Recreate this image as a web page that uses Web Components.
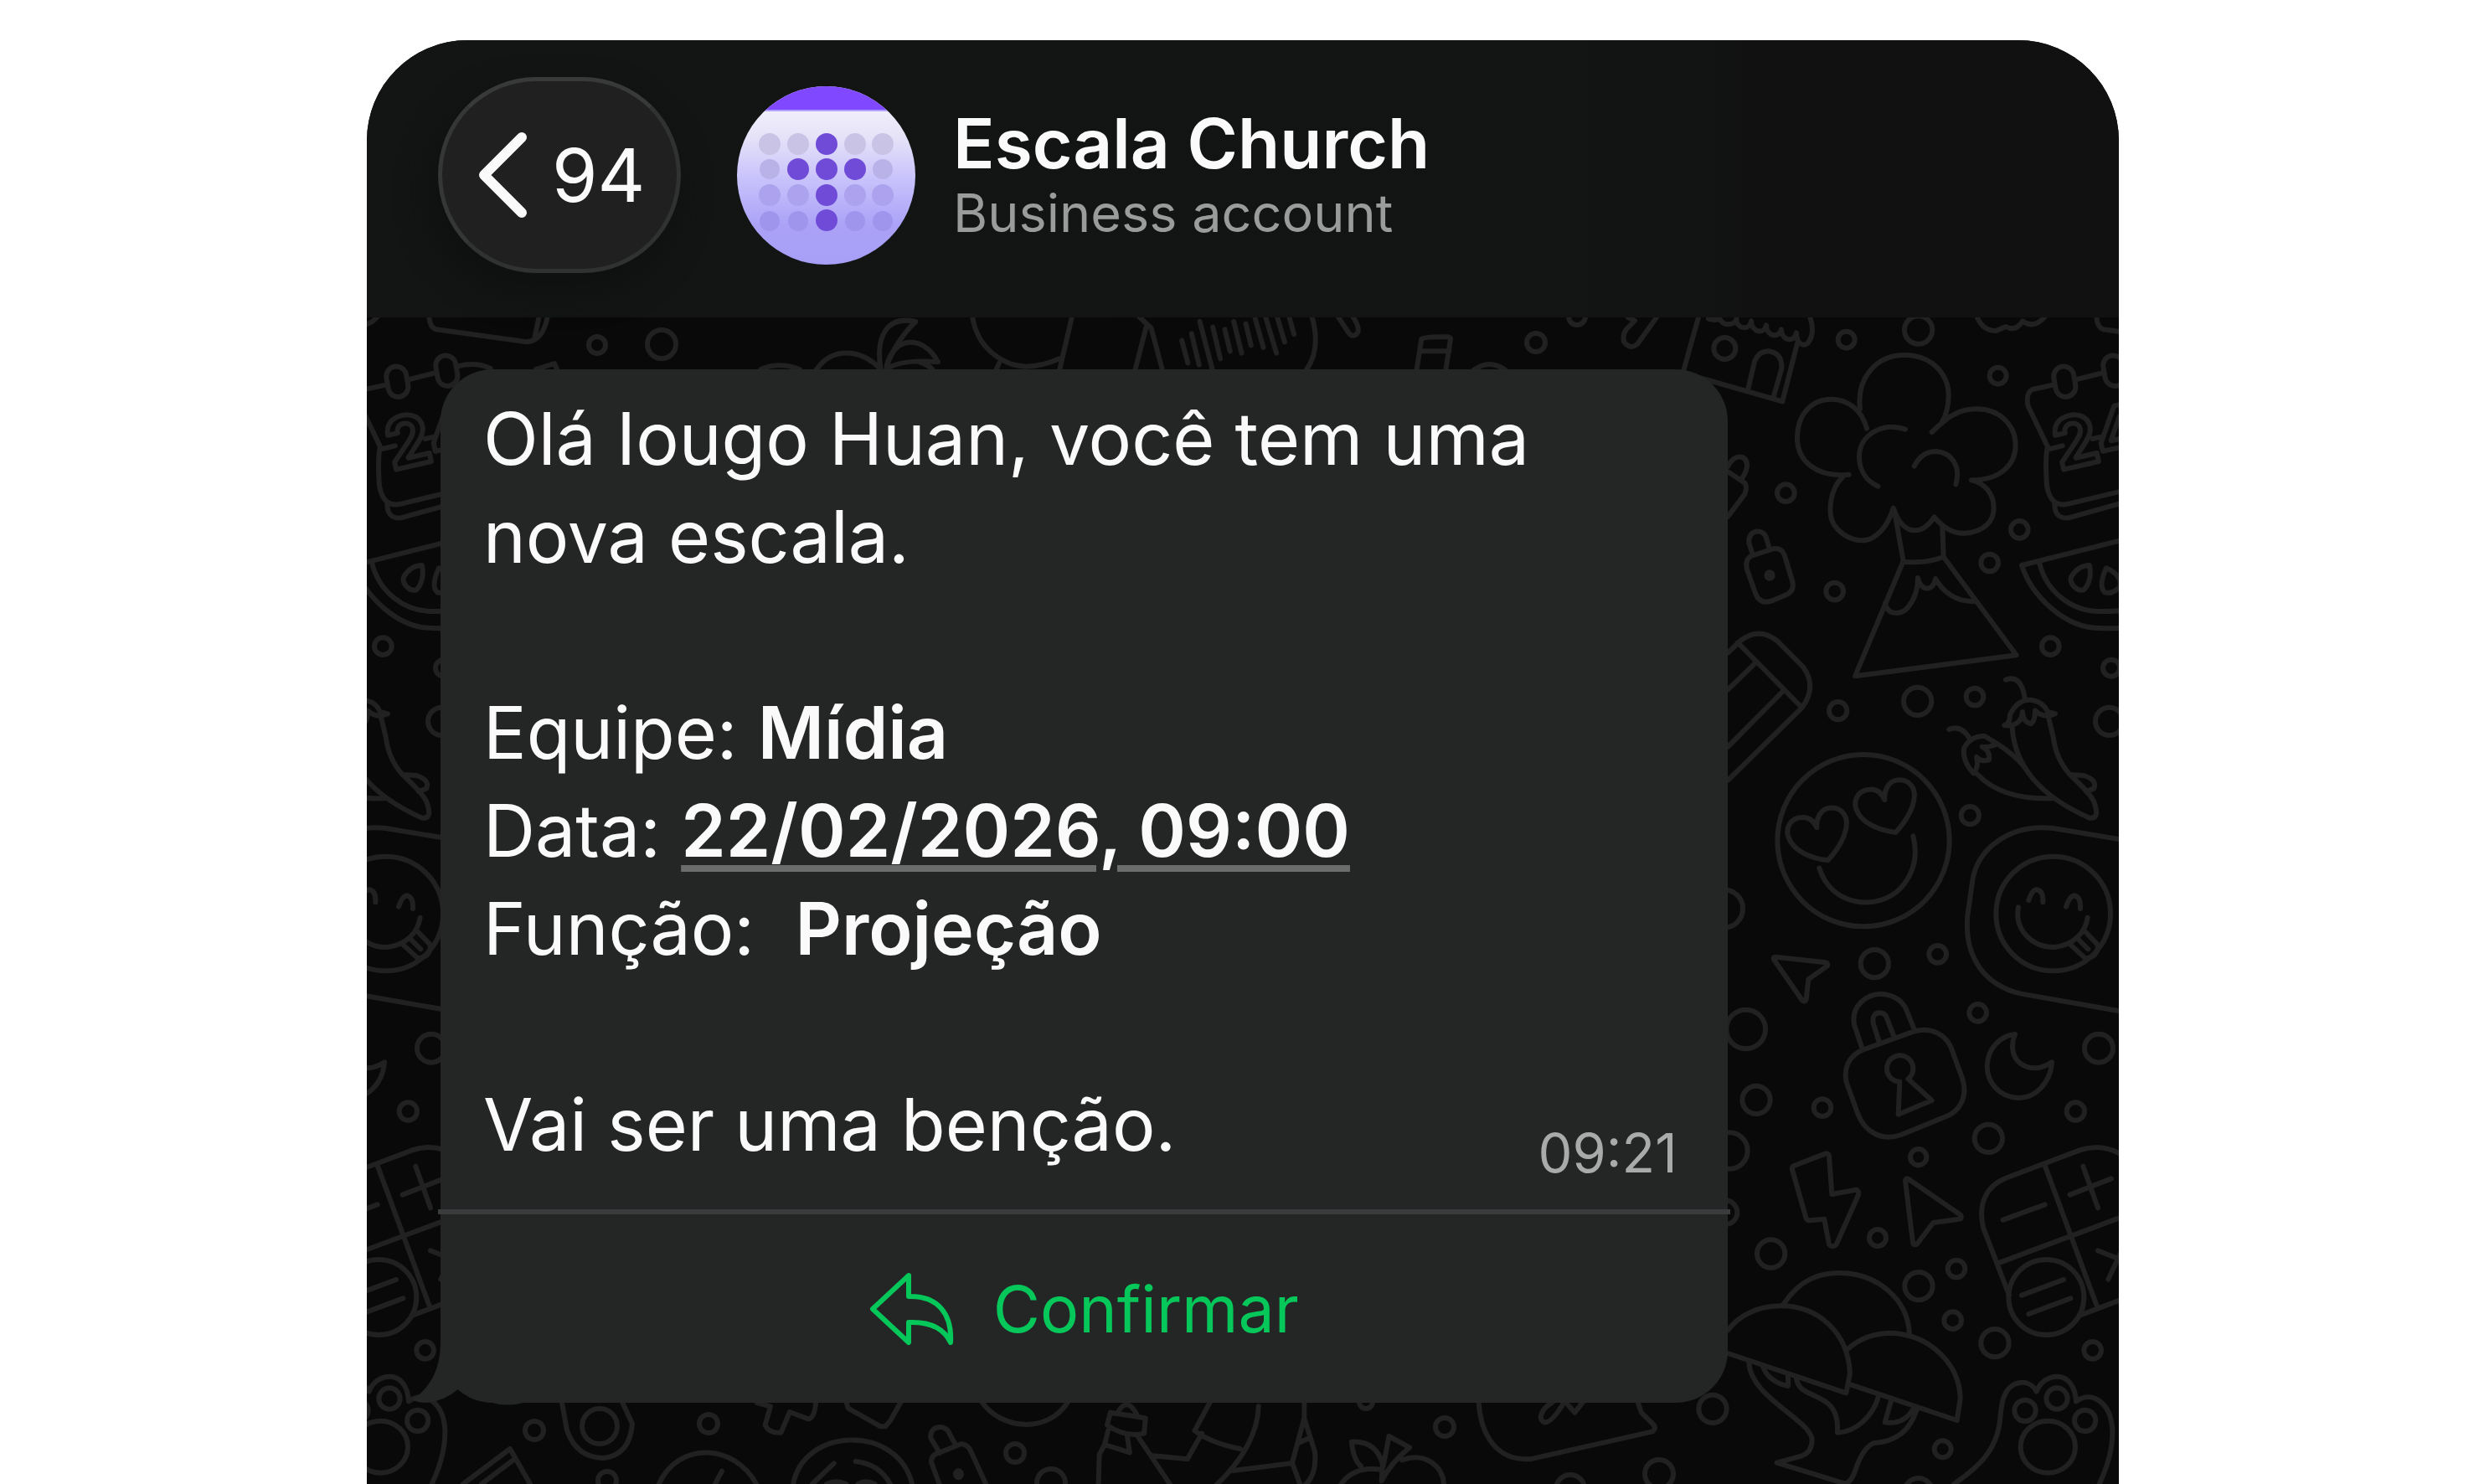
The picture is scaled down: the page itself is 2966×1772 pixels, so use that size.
<!DOCTYPE html>
<html lang="pt-BR">
<head>
<meta charset="utf-8">
<meta name="viewport" content="width=device-width, initial-scale=1">
<title>Escala Church</title>
<style>
  body { margin: 0; background: #fff; font-family: Inter, "Liberation Sans", sans-serif; color: #fafafa; }
  message-bubble strong, message-bubble a { font-weight: 600; color: inherit; }
  message-bubble a { text-decoration: underline; text-decoration-color: #6b6c6c; text-decoration-thickness: 8px; text-underline-offset: 10px; }
</style>
</head>
<body>
<chat-screen>
  <chat-header slot="header" unread="94" name="Escala Church" status="Business account"></chat-header>
  <message-bubble time="09:21" action="Confirmar">
    <p>Olá Iougo Huan, você tem uma nova escala.</p>
    <p>Equipe: <strong>Mídia</strong><br>Data: <a href="#data">22/02/2026, 09:00</a><br>Função:&nbsp; <strong>Projeção</strong></p>
    <p slot="closing">Vai ser uma benção.</p>
  </message-bubble>
</chat-screen>

<template id="screen-tpl">
  <style>
    :host { display: flex; flex-direction: column; box-sizing: border-box; min-height: 100vh; padding: 48px 436px 0 438px; }
    .phone { flex: 1; display: flex; flex-direction: column; border-radius: 120px 120px 0 0; overflow: hidden; background: #090909; }
    .chat { flex: 1; display: grid; }
    .chat > * { grid-area: 1 / 1; }
    .thread { padding: 62px 88px 0; display: flex; flex-direction: column; align-items: flex-start; }
  </style>
  <main class="phone">
    <slot name="header"></slot>
    <section class="chat">
      <doodle-wallpaper></doodle-wallpaper>
      <div class="thread"><slot></slot></div>
    </section>
  </main>
</template>

<template id="header-tpl">
  <style>
    :host { display: block; }
    header { display: flex; align-items: center; padding: 44px 85px 53px; background: linear-gradient(90deg, #121514, #121414 74%, #111 79%); }
    button { box-sizing: border-box; width: 290px; height: 234px; border: 5px solid #303232; border-top-color: #383a3a; border-left-color: #353737; border-radius: 117px; background: #202020; color: #fafafa; font: inherit; font-size: 88px; line-height: 100px; display: flex; align-items: center; gap: 30px; padding: 0 0 0 43px; margin-right: 67px; box-shadow: -8px 20px 40px #0f1010; }
    .chevron { width: 58px; height: 102px; }
    .avatar { width: 213px; height: 213px; margin-right: 45px; }
    h1 { margin: 0; font-size: 82px; line-height: 90px; font-weight: 600; }
    p { margin: 0; font-size: 63px; line-height: 74px; color: #9a9b9b; }
  </style>
  <header>
    <button type="button" aria-label="Voltar">
      <svg class="chevron" viewBox="0 0 58 102" fill="none" stroke="#fafafa" stroke-width="12" stroke-linecap="round" stroke-linejoin="round" aria-hidden="true"><path d="M52 6 7 51l45 45"/></svg>
      <span id="unread"></span>
    </button>
    <svg class="avatar" viewBox="0 0 213 213" aria-hidden="true">
      <defs>
        <linearGradient id="sky" x1="0" y1="0" x2="0" y2="1"><stop offset=".14" stop-color="#f0eefb"/><stop offset=".28" stop-color="#e6e3f8"/><stop offset=".52" stop-color="#c8c2fb"/><stop offset=".78" stop-color="#aba2f7"/><stop offset="1" stop-color="#a79ef7"/></linearGradient>
        <clipPath id="disc"><circle cx="106.5" cy="106.5" r="106.5"/></clipPath>
      </defs>
      <g clip-path="url(#disc)">
        <rect width="213" height="213" fill="url(#sky)"/>
        <rect width="213" height="28" fill="#8049ff"/>
        <rect y="28" width="213" height="2" fill="#b0a2fa"/>
        <g fill="#c9c4e6"><circle cx="39" cy="69" r="13"/><circle cx="73" cy="69" r="13"/><circle cx="141" cy="69" r="13"/><circle cx="174" cy="69" r="13"/></g>
        <g fill="#b9b2e8"><circle cx="39" cy="99" r="12"/><circle cx="174" cy="99" r="12"/></g>
        <g fill="#aca2ee"><circle cx="39" cy="130" r="13"/><circle cx="73" cy="130" r="13"/><circle cx="141" cy="130" r="13"/><circle cx="174" cy="130" r="13"/></g>
        <g fill="#9f95ed"><circle cx="39" cy="161" r="12"/><circle cx="73" cy="161" r="12"/><circle cx="141" cy="161" r="12"/><circle cx="174" cy="161" r="12"/></g>
        <g fill="#6f4bd8"><circle cx="107" cy="69" r="13"/><circle cx="73" cy="99" r="13"/><circle cx="107" cy="99" r="13"/><circle cx="141" cy="99" r="13"/><circle cx="107" cy="130" r="13"/><circle cx="107" cy="160" r="13"/></g>
      </g>
    </svg>
    <div><h1></h1><p></p></div>
  </header>
</template>

<template id="bubble-tpl">
  <style>
    :host { --line: 117px; --surface: #242625; display: block; width: 80.2%; min-width: 1200px; }
    article { display: grid; position: relative; background: var(--surface); border-radius: 62px; }
    .tail { position: absolute; left: -34px; bottom: -6px; width: 140px; height: 84px; }
    .body { display: flex; flex-direction: column; gap: var(--line); padding: 25px 60px 42px 51px; font-size: 86px; line-height: var(--line); }
    ::slotted(p) { margin: 0; }
    .last { display: flex; justify-content: space-between; align-items: flex-end; }
    time { font-size: 65px; line-height: 50px; color: #a9aaaa; }
    button { position: relative; border: 0; border-top: 6px solid #3a3b3d; margin: 0 -3px; height: 231px; padding: 0; background: none; color: #06c75a; font: inherit; font-size: 77px; display: flex; justify-content: center; align-items: center; gap: 46px; }
    button svg { width: 102px; height: 88px; }
  </style>
  <article>
    <svg class="tail" viewBox="492 1597 140 84" aria-hidden="true"><path fill="#242625" d="M526 1597C527 1632 516 1656 492 1671q6 4 18 4 20-2 37-16 18 12 41 16 17 5 37 0V1597z"/></svg>
    <div class="body">
      <slot></slot>
      <div class="last"><slot name="closing"></slot><time></time></div>
    </div>
    <button type="button">
      <svg viewBox="0 0 102 88" fill="none" stroke="currentColor" stroke-width="6" stroke-linejoin="round" aria-hidden="true"><path d="M47 4 4 44l43 40V60c22-1 41 5 50 24C99 50 82 28 47 29z"/></svg>
      <span></span>
    </button>
  </article>
</template>

<template id="doodle-tpl">
  <style>
    :host { display: block; height: 0; min-height: 100%; }
    svg { display: block; width: 100%; height: 100%; }
    path, circle, ellipse, rect, text { vector-effect: non-scaling-stroke; }
    text { font: 700 250px Inter, sans-serif; }
  </style>
  <svg viewBox="438 379 2092 1393" preserveAspectRatio="xMinYMin slice" fill="none" stroke="#212121" stroke-width="6" stroke-linecap="round" stroke-linejoin="round" aria-hidden="true">
    <defs>
      <g id="tile">
        <g transform="translate(2040 360) scale(.33333)">
          <circle cx="58" cy="168" r="39"/><circle cx="494" cy="137" r="30"/><circle cx="752" cy="102" r="50"/><circle cx="1037" cy="266" r="30"/><circle cx="277" cy="686" r="31"/><circle cx="1114" cy="817" r="31"/><circle cx="1007" cy="936" r="31"/><circle cx="452" cy="1038" r="31"/><circle cx="1225" cy="1235" r="31"/><circle cx="1443" cy="1313" r="30"/>
          <path d="M-36 57-88 243M-100 255 10 285 265 358 318 150M140 322 165 215Q180 178 215 178 265 185 262 240L232 345"/>
          <path d="M0 62Q25 70 40 62C55 92 95 85 100 62 100 100 148 105 153 70 155 112 200 118 207 85 208 128 255 132 261 100 262 142 308 148 315 112 315 160 345 158 355 150Q385 115 362 50"/>
          <path d="M960 50Q980 105 1030 105L1065 90Q1100 110 1125 70 1165 100 1205 55M1390 50Q1390 92 1415 100L1740 145Q1800 140 1815 50M1785 50 1768 130"/>
          <path d="M567 455C550 390 500 350 440 350 365 350 318 410 318 488 318 570 385 632 503 620M480 630C435 670 425 760 450 800 485 850 550 870 590 845 630 820 650 780 662 740 680 790 705 820 740 820 765 820 790 800 809 772 840 810 880 832 920 830 985 825 1022 790 1022 740 1022 690 990 650 942 640 1050 640 1100 580 1100 515 1100 440 1040 385 960 385 890 385 850 420 800 468"/>
          <path d="M543 385C530 280 595 192 703 192 810 192 860 270 860 335 860 380 850 410 835 435M705 458C620 430 540 480 540 555 540 610 570 645 607 662M737 590C760 545 790 537 815 537 870 540 905 590 886 655"/>
          <path d="M665 745 698 930 525 1342 1103 1267 842 915 838 805M698 932Q775 940 842 915M633 1080C640 1125 690 1125 715 1095 740 1065 750 1030 750 990 760 1040 805 1040 813 993 840 1040 890 1080 955 1073"/>
          <path d="M152 912 235 885Q262 882 272 908L300 1000Q310 1035 280 1050L225 1073Q185 1085 170 1050L138 960Q130 925 152 912ZM158 905 145 865C140 815 200 810 208 850L218 885"/>
          <circle cx="219" cy="981" r="11" fill="#212121"/>
          <path d="M70 590C90 545 140 545 138 590Q135 615 115 640M70 610 130 650Q140 665 130 690L70 770"/>
          <path d="M70 1258 115 1215Q180 1165 245 1215L340 1310Q390 1380 335 1455L70 1715M105 1222 335 1455M70 1390 168 1295M70 1595 268 1395"/>
          <path d="M1238 298 1160 315Q1135 330 1145 375L1215 520Q1205 560 1212 660 1225 740 1290 725L1560 660M1240 725Q1240 780 1290 775L1560 700M1315 280 1415 255M1492 232Q1560 215 1610 240M1215 530 1268 517M1375 492 1408 485"/>
          <rect x="1240" y="232" width="72" height="110" rx="36" transform="rotate(-10 1276 287)"/>
          <rect x="1417" y="193" width="72" height="110" rx="36" transform="rotate(-10 1453 248)"/>
          <text x="1258" y="605" transform="rotate(-13 1258 605)">24</text>
          <path d="M1122 945 1560 835M1122 945C1160 1060 1280 1170 1400 1170Q1500 1175 1600 1150M1185 935C1210 1040 1300 1110 1400 1110Q1480 1112 1560 1095M1365 945Q1375 1000 1345 1033C1320 1040 1290 1010 1300 985Q1325 945 1365 945ZM1425 955Q1395 1020 1420 1042 1450 1050 1475 1020 1480 980 1425 955Z"/>
        </g>
        <g transform="translate(2040 800) scale(.33333)">
          <circle cx="464" cy="146" r="32"/><circle cx="749" cy="112" r="50"/><circle cx="954" cy="96" r="31"/><circle cx="1436" cy="184" r="50"/><circle cx="937" cy="521" r="32"/><circle cx="595" cy="1052" r="50"/><circle cx="821" cy="1018" r="31"/><circle cx="55" cy="855" r="68"/><circle cx="134" cy="1287" r="70"/><circle cx="965" cy="1228" r="31"/><circle cx="1398" cy="1355" r="51"/>
          <path d="M1065 35Q1120 15 1133 100M1060 198Q1080 195 1080 160 1110 100 1160 108 1200 115 1215 150L1242 157Q1200 175 1170 145 1170 185 1155 193 1125 185 1125 150 1120 205 1060 198M1088 205C1095 320 1160 440 1365 530Q1405 535 1380 470 1365 440 1295 375 1245 320 1235 240L1218 170M1295 375 1345 378Q1395 395 1380 425L1352 435"/>
          <path d="M862 213Q905 195 935 245M950 370Q910 330 915 280 940 235 990 237L1035 265Q1000 280 980 275 1010 290 1005 322 975 330 960 312 970 345 950 370M965 375Q1050 465 1230 460M1035 265Q1090 300 1130 345"/>
          <circle cx="555" cy="611" r="308"/>
          <path id="heart" d="M388 565Q370 525 335 528C290 530 275 570 287 600 305 650 370 675 428 682 470 635 495 590 495 545 490 500 455 490 430 495 400 500 385 535 388 565Z"/>
          <use href="#heart" x="243" y="-100"/>
          <path d="M397 710C440 850 610 865 690 780Q760 700 733 595"/>
          <path d="M1560 621 1235 567C1080 550 960 640 945 760L928 880C915 1030 990 1130 1120 1160L1560 1237"/>
          <circle cx="1235" cy="873" r="205"/>
          <path d="M1147 825Q1160 787 1175 787 1200 790 1198 832M1281 848Q1295 808 1312 808 1335 815 1332 855M1110 850C1095 930 1160 995 1240 993 1310 985 1350 940 1358 887M1345 933 1395 985Q1395 1030 1350 1033L1298 985M1320 960 1360 1000"/>
          <path d="M240 1028 420 1048Q430 1050 425 1060L358 1108 350 1180Q345 1192 335 1183L234 1037Q230 1028 240 1028Z"/>
          <path d="M550 1362 735 1295C800 1275 850 1310 868 1350L910 1465C930 1530 900 1580 850 1600L690 1665C620 1690 560 1655 535 1590L495 1480C480 1420 510 1380 550 1362ZM550 1355 522 1270C510 1200 570 1160 620 1160 670 1165 700 1190 712 1225L738 1290M612 1335 590 1265Q585 1228 615 1228 635 1230 640 1250L663 1310M685 1475A47 47 0 1 1 715 1465L800 1542 680 1592Z"/>
          <path d="M1098 1305C1060 1400 1150 1460 1230 1405 1225 1480 1170 1535 1110 1533 1040 1530 998 1475 998 1420 1000 1350 1050 1310 1098 1305Z"/>
        </g>
        <g transform="translate(2040 1280) scale(.33333)">
          <circle cx="171" cy="100" r="50"/><circle cx="408" cy="128" r="31"/><circle cx="75" cy="282" r="65"/><circle cx="1315" cy="141" r="32"/><circle cx="1003" cy="238" r="50"/><circle cx="752" cy="305" r="29"/><circle cx="60" cy="503" r="43"/><circle cx="224" cy="651" r="50"/><circle cx="606" cy="594" r="30"/><circle cx="888" cy="705" r="31"/><circle cx="753" cy="767" r="50"/><circle cx="875" cy="890" r="31"/><circle cx="1026" cy="971" r="50"/><circle cx="1376" cy="997" r="31"/><circle cx="15" cy="1207" r="50"/><circle cx="839" cy="1351" r="30"/><circle cx="752" cy="1505" r="50"/>
          <path d="M306 336 420 292Q430 292 432 300L442 438 530 422Q540 428 537 440L458 618Q445 632 432 618L415 527 360 532Q350 530 348 518L300 350Q298 340 306 336Z"/>
          <path d="M705 390Q708 376 718 385L903 512Q910 525 898 527L805 540 748 615Q735 625 732 610Z"/>
          <path d="M1077 800 985 560C965 480 990 410 1065 380L1330 280Q1420 250 1500 310M1205 335 1390 835M1045 682 1560 490M1055 530 1205 475M1342 338 1395 487M1295 440 1443 382M1395 640 1520 690M1432 743 1490 620M1122 800 1272 744M1147 867 1297 811M1330 872 1560 785"/>
          <circle cx="1210" cy="807" r="135"/>
          <path d="M270 830C330 740 400 720 470 720 600 720 715 810 720 940M70 925C110 870 180 838 260 838 390 838 500 930 507 1080L493 1150 70 1008M500 992C550 945 610 935 660 935 800 945 900 1050 902 1170L890 1248 510 1120"/>
          <path d="M145 1042C150 1160 350 1240 370 1310Q375 1360 335 1375L245 1400 490 1475Q510 1470 525 1430 550 1350 590 1330C670 1325 720 1290 748 1205M195 1055Q215 1110 285 1125L285 1085M315 1095C320 1160 400 1150 440 1200Q465 1230 462 1292C530 1290 590 1230 608 1165M655 1175 632 1255Q700 1265 735 1205"/>
          <path d="M880 1476C960 1420 1035 1360 1045 1240Q1050 1180 1060 1160C1080 1105 1150 1095 1175 1145 1200 1075 1310 1060 1317 1180 1370 1140 1440 1180 1447 1280Q1450 1370 1400 1476"/>
          <circle cx="1134" cy="1213" r="38"/><circle cx="1248" cy="1170" r="38"/><circle cx="1349" cy="1249" r="38"/><ellipse cx="1216" cy="1343" rx="98" ry="93"/>
        </g>
      </g>
    </defs>
    <use href="#tile"/>
    <use href="#tile" x="-1991"/>
    <circle cx="713" cy="412" r="10"/><circle cx="790" cy="411" r="17"/><circle cx="1834" cy="409" r="11"/><circle cx="1883" cy="378" r="10"/>
    <path d="M640 441 662 434 665 441M1978 379 1955 411Q1946 418 1939 408 1937 400 1942 393L1952 383M1944 379 1952 383"/>
    <g transform="translate(700 370) scale(.33333)">
      <path d="M625 213Q690 185 765 213M825 213C880 135 980 135 1055 213 1035 90 1080 20 1180 42 1130 90 1095 150 1075 205 1100 90 1210 90 1260 187Q1130 175 1075 213M1195 187Q1230 200 1240 213"/>
    </g>
    <g transform="translate(1100 40) scale(.44643 .33333)">
      <path d="M137 1015C150 1130 220 1190 280 1193Q330 1190 368 1165M403 1015 370 1205M208 1182 200 1205M583 1015 615 1055 645 1205M603 1045 572 1205"/>
      <path d="M697 1100 713 1180M723 1075 743 1187M745 1032 778 1200M780 1052 800 1165M812 1060 826 1138M836 1032 857 1145M868 1040 882 1117M893 1020 915 1125M922 1020 950 1145M953 1020 972 1105M985 1020 997 1077M1045 1015Q1070 1130 1030 1205M1115 1015 1142 1070Q1155 1095 1168 1070 1172 1050 1155 1015"/>
      <path d="M1325 1205 1338 1095Q1345 1085 1410 1087 1418 1090 1415 1100L1403 1205M1335 1138 1412 1138M1478 1205Q1520 1165 1562 1205"/>
    </g>
    <circle cx="716" cy="1703" r="21"/><circle cx="846" cy="1700" r="11"/><circle cx="725" cy="1768" r="11"/><circle cx="1212" cy="1735" r="11"/><circle cx="1255" cy="1771" r="17"/><circle cx="638" cy="1708" r="11"/><circle cx="1725" cy="1704" r="11"/><circle cx="1631" cy="1674" r="8"/><circle cx="1981" cy="1760" r="17"/><circle cx="1875" cy="1778" r="17"/>
    <path d="M671 1675 677 1708Q688 1740 720 1741 752 1738 755 1700L742 1672M553 1772 609 1730 633 1772M575 1772 612 1744"/>
    <g transform="translate(700 1400) scale(.57422 .33333)">
      <path d="M355 825 383 838 372 905Q380 935 405 932L423 858 462 883Q475 880 478 815M540 820 545 845 612 910 622 910 632 890 655 820M822 820C860 920 960 940 1002 820M150 1120C190 960 310 970 355 1120M430 1120C450 910 650 900 678 1120M470 1116 515 1042M560 1035Q610 1045 632 1116M268 1116 282 1070M500 1116Q520 1100 540 1116M565 1116Q580 1100 600 1116"/>
      <path d="M735 1005 716 950C715 900 750 905 755 935L768 975M735 1120 718 1040Q715 1010 740 1000L780 972Q795 975 800 1000L832 1120"/>
      <ellipse cx="774" cy="1081" rx="6" ry="12" fill="#212121"/>
      <path d="M1090 860 1083 905Q1120 950 1160 935L1163 880Q1130 870 1090 860M1105 860Q1125 800 1145 868M1085 925 1078 975 1130 1003 1125 945M1078 975 1067 1010 1065 1120M1145 940 1215 1120M1298 820 1265 925Q1300 970 1360 990M1280 935 1250 1027 1180 1015M1398 838Q1395 980 1310 1120M1345 1068 1465 1042M1493 820V880L1468 1040 1485 1120M1493 880 1515 1000Q1520 1080 1495 1120M1480 970 1505 950"/>
    </g>
    <g transform="translate(1500 1300) scale(.44643 .33333)">
      <path d="M255 1265Q320 1260 338 1345L335 1405Q360 1340 410 1285L355 1245 340 1350M255 1265Q260 1330 280 1352M225 1420Q260 1350 335 1365M390 1330C450 1300 500 1350 502 1420M595 1120C600 1250 650 1340 740 1325L1060 1228Q1072 1215 1060 1200L1030 1160 1020 1120M825 1120Q790 1200 770 1195 750 1180 775 1140L795 1120M825 1120 852 1160 875 1120"/>
    </g>
  </svg>
</template>

<script>
  class TemplateElement extends HTMLElement {
    constructor(templateId) {
      super();
      this.attachShadow({ mode: 'open' }).append(document.getElementById(templateId).content.cloneNode(true));
    }
    setText(selector, attribute) {
      this.shadowRoot.querySelector(selector).textContent = this.getAttribute(attribute) || '';
    }
  }

  customElements.define('doodle-wallpaper', class extends TemplateElement {
    constructor() { super('doodle-tpl'); }
  });

  customElements.define('chat-header', class extends TemplateElement {
    constructor() { super('header-tpl'); }
    connectedCallback() {
      this.setText('#unread', 'unread');
      this.setText('h1', 'name');
      this.setText('p', 'status');
    }
  });

  customElements.define('message-bubble', class extends TemplateElement {
    constructor() { super('bubble-tpl'); }
    connectedCallback() {
      this.setText('time', 'time');
      this.setText('button span', 'action');
    }
  });

  customElements.define('chat-screen', class extends TemplateElement {
    constructor() { super('screen-tpl'); }
  });
</script>
</body>
</html>
